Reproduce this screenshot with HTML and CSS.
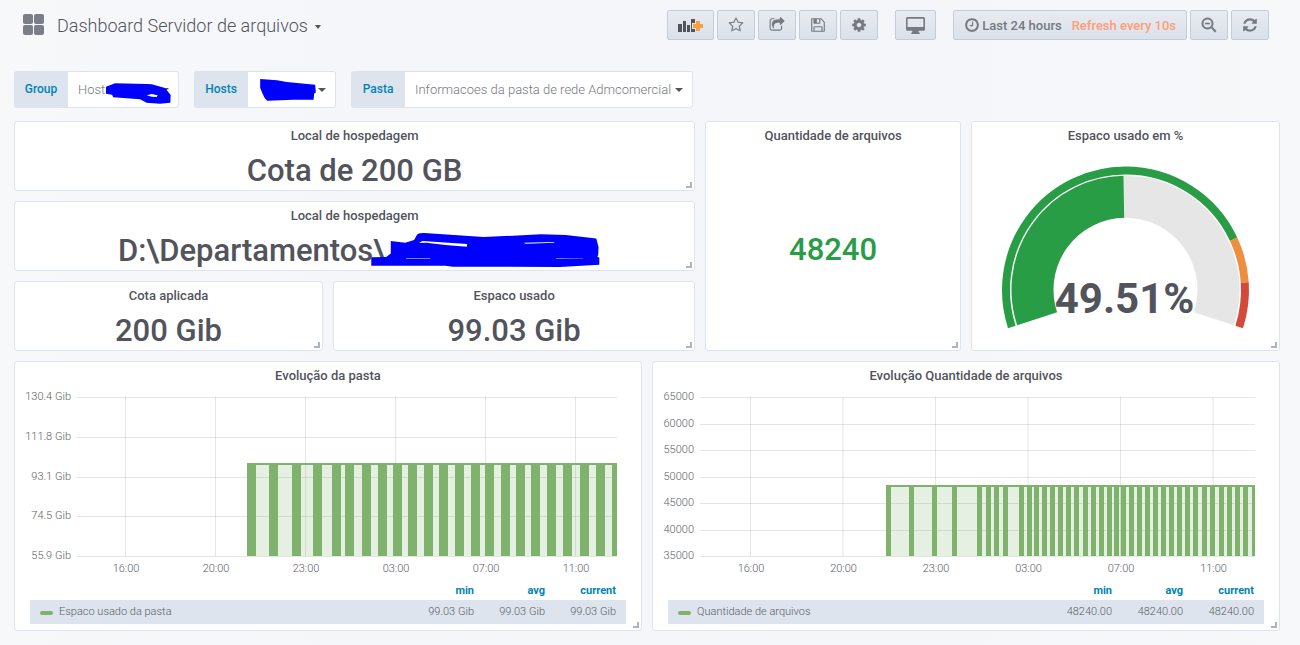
FILE: index.html
```html
<!DOCTYPE html>
<html lang="pt-BR">

<head>
    <meta charset="UTF-8">
    <meta name="viewport" content="width=device-width, initial-scale=1.0">
    <title>Dashboard Servidor de arquivos</title>
    <link rel="stylesheet" href="styles.css">
</head>

<body>
    <header class="navbar">
        <a href="#" class="title">
            <svg class="title-icon" viewBox="0 0 22 22">
                <rect x="0" y="0" width="10" height="10" rx="2" />
                <rect x="11" y="0" width="10" height="10" rx="2" />
                <rect x="0" y="11" width="10" height="10" rx="2" />
                <rect x="11" y="11" width="10" height="10" rx="2" />
            </svg>
            <h1>Dashboard Servidor de arquivos</h1>
            <span class="caret"></span>
        </a>
        <nav class="tools">
            <div class="group">
                <button class="btn" aria-label="Add panel">
                    <svg class="icon-add" viewBox="0 0 25 15">
                        <path d="M0 6h4v8H0zM5 3h3v11H5zM9 7h3v7H9zM13 1h4v13h-4z" fill="#52545c" />
                        <path d="M18 3h4v3h3v4h-3v3h-4v-3h-3V6h3z" fill="#f9a03f" stroke="#e2e6ed" stroke-width="2" paint-order="stroke" />
                    </svg>
                </button>
                <button class="btn" aria-label="Star">
                    <svg class="icon" viewBox="0 0 1792 1792"><path d="M1201 1004l306-297-422-62-189-382-189 382-422 62 306 297-73 421 378-199 377 199zm527-357q0 22-26 48l-363 354 86 500q1 7 1 20 0 50-41 50-19 0-40-12l-449-236-449 236q-22 12-40 12-21 0-31.5-14.5t-10.5-35.5q0-6 2-20l86-500-364-354q-25-27-25-48 0-37 56-46l502-73 225-455q19-41 49-41t49 41l225 455 502 73q56 9 56 46z" /></svg>
                </button>
                <button class="btn" aria-label="Share">
                    <svg class="icon" viewBox="0 0 1792 1792"><path d="M1472 989v259q0 119-84.5 203.5t-203.5 84.5h-832q-119 0-203.5-84.5t-84.5-203.5v-832q0-119 84.5-203.5t203.5-84.5h255q13 0 22.5 9.5t9.5 22.5q0 27-26 32-77 26-133 60-10 4-16 4h-112q-66 0-113 47t-47 113v832q0 66 47 113t113 47h832q66 0 113-47t47-113v-214q0-19 18-29 28-13 54-37 16-16 35-8 21 9 21 29zm237-496l-384 384q-18 19-45 19-12 0-25-5-39-17-39-59v-192h-160q-323 0-438 131-119 137-74 473 3 23-20 34-8 2-12 2-16 0-26-13-10-14-21-31t-39.5-68.5-49.5-99.5-38.5-114-17.5-122q0-49 3.5-91t14-90 28-88 47-81.5 68.5-74 94.5-61.5 124.5-48.5 159.5-30.5 196.5-11h160v-192q0-42 39-59 13-5 25-5 26 0 45 19l384 384q19 19 19 45t-19 45z" /></svg>
                </button>
                <button class="btn" aria-label="Save">
                    <svg class="icon" viewBox="0 0 1792 1792"><path d="M512 1536h768v-384h-768v384zm896 0h128v-896q0-14-10-38.5t-20-34.5l-281-281q-10-10-34-20t-39-10v416q0 40-28 68t-68 28h-576q-40 0-68-28t-28-68v-416h-128v1280h128v-416q0-40 28-68t68-28h832q40 0 68 28t28 68v416zm-384-928v-320q0-13-9.5-22.5t-22.5-9.5h-192q-13 0-22.5 9.5t-9.5 22.5v320q0 13 9.5 22.5t22.5 9.5h192q13 0 22.5-9.5t9.5-22.5zm640 32v928q0 40-28 68t-68 28h-1344q-40 0-68-28t-28-68v-1344q0-40 28-68t68-28h928q40 0 88 20t76 48l280 280q28 28 48 76t20 88z" /></svg>
                </button>
                <button class="btn" aria-label="Settings">
                    <svg class="icon" viewBox="0 0 1792 1792"><path d="M1152 896q0-106-75-181t-181-75-181 75-75 181 75 181 181 75 181-75 75-181zm512-109v222q0 12-8 23t-20 13l-185 28q-19 54-39 91 35 50 107 138 10 12 10 25t-9 23q-27 37-99 108t-94 71q-12 0-26-9l-138-108q-44 23-91 38-16 136-29 186-7 28-36 28h-222q-14 0-24.5-8.5t-11.5-21.5l-28-184q-49-16-90-37l-141 107q-10 9-25 9-14 0-25-11-126-114-165-168-7-10-7-23 0-12 8-23 15-21 51-66.5t54-70.5q-27-50-41-99l-183-27q-13-2-21-12.5t-8-23.5v-222q0-12 8-23t19-13l186-28q14-46 39-92-40-57-107-138-10-12-10-24 0-10 9-23 26-36 98.5-107.5t94.5-71.5q13 0 26 10l138 107q44-23 91-38 16-136 29-186 7-28 36-28h222q14 0 24.5 8.5t11.5 21.5l28 184q49 16 90 37l142-107q9-9 24-9 13 0 25 10 129 119 165 170 7 8 7 22 0 12-8 23-15 21-51 66.5t-54 70.5q26 50 41 98l183 28q13 2 21 12.5t8 23.5z" /></svg>
                </button>
            </div>
            <button class="btn" aria-label="Cycle view mode">
                <svg class="icon-tv" viewBox="0 0 18 16"><path fill-rule="evenodd" d="M1.500 0h15A1.500 1.500 0 0 1 18 1.500v10a1.500 1.500 0 0 1-1.500 1.500H12v1l1 1v1H5v-1l1-1v-1H1.500A1.500 1.500 0 0 1 0 11.500v-10A1.500 1.500 0 0 1 1.500 0zM1.500 1.500v8h15v-8z" /></svg>
            </button>
            <div class="group">
                <button class="btn btn-time">
                    <svg class="icon" viewBox="0 0 1792 1792"><path d="M1024 544v448q0 14-9 23t-23 9h-320q-14 0-23-9t-9-23v-64q0-14 9-23t23-9h224v-352q0-14 9-23t23-9h64q14 0 23 9t9 23zm416 352q0-148-73-273t-198-198-273-73-273 73-198 198-73 273 73 273 198 198 273 73 273-73 198-198 73-273zm224 0q0 209-103 385.5t-279.5 279.5-385.5 103-385.5-103-279.5-279.5-103-385.5 103-385.5 279.5-279.5 385.5-103 385.5 103 279.5 279.5 103 385.5z" /></svg>
                    <span>Last 24 hours</span>
                    <span class="refresh">Refresh every 10s</span>
                </button>
                <button class="btn" aria-label="Zoom out">
                    <svg class="icon" viewBox="0 0 16 16"><path d="M4 5.700h5v1.600H4z" /><circle cx="6.500" cy="6.500" r="5" fill="none" stroke="#767980" stroke-width="2" /><path d="M10 11l1.300-1.300 4.200 4.200-1.600 1.600z" /></svg>
                </button>
                <button class="btn" aria-label="Refresh">
                    <svg class="icon" viewBox="0 0 1792 1792"><path d="M1639 1056q0 5-1 7-64 268-268 434.500t-478 166.500q-146 0-282.500-55t-243.500-157l-129 129q-19 19-45 19t-45-19-19-45v-448q0-26 19-45t45-19h448q26 0 45 19t19 45-19 45l-137 137q71 66 161 102t187 36q134 0 250-65t186-179q11-17 53-117 8-23 30-23h192q13 0 22.500 9.500t9.500 22.500zm25-800v448q0 26-19 45t-45 19h-448q-26 0-45-19t-19-45 19-45l138-138q-148-137-349-137-134 0-250 65t-186 179q-11 17-53 117-8 23-30 23h-199q-13 0-22.500-9.500t-9.500-22.500v-7q65-268 270-434.500t480-166.500q146 0 284 55.500t245 156.500l130-129q19-19 45-19t45 19 19 45z" /></svg>
                </button>
            </div>
        </nav>
    </header>

    <section class="variables">
        <div class="variable">
            <label for="var-group">Group</label>
            <select id="var-group" class="select-group">
                <option>Host</option>
            </select>
            <svg class="scribble scribble-group" viewBox="318 249 195 63">
                <path fill-rule="evenodd" d="M318 260L345 250 440 252 455 253 495 264 512 285 511 308 480 311 440 308 420 298 340 292 336 284 318 281zM440 286L455 282 473 286 470 291 455 290z" />
            </svg>
        </div>
        <div class="variable">
            <label for="var-hosts">Hosts</label>
            <select id="var-hosts" class="select-hosts">
                <option></option>
            </select>
            <svg class="scribble scribble-hosts" viewBox="777 238 174 68">
                <path d="M778 238L830 242 860 247 948 256 950 280 945 283 943 302 880 302 800 305 792 297 785 283 778 265z" />
            </svg>
        </div>
        <div class="variable">
            <label for="var-pasta">Pasta</label>
            <select id="var-pasta">
                <option>Informacoes da pasta de rede Admcomercial</option>
            </select>
        </div>
    </section>

    <main class="dashboard">
        <section class="panel w13 h2">
            <h2>Local de hospedagem</h2>
            <div class="value">Cota de 200 GB</div>
        </section>
        <section class="panel w5 h6">
            <h2>Quantidade de arquivos</h2>
            <div class="value green">48240</div>
        </section>
        <section class="panel w6 h6">
            <h2>Espaco usado em %</h2>
            <svg class="gauge" viewBox="0 0 300 190">
                <!-- 216 degree arcs, pathLength 100 so dashes are percents -->
                <path class="arc base" d="M61.600 168.700A93 93 0 1 1 238.400 168.700" />
                <path class="arc fill" pathLength="100" stroke-dasharray="49.510 100" d="M61.600 168.700A93 93 0 1 1 238.400 168.700" />
                <path class="ring low" pathLength="100" stroke-dasharray="80 100" d="M36.300 176.900A119.500 119.500 0 1 1 263.700 176.900" />
                <path class="ring mid" pathLength="100" stroke-dasharray="0 80 10 100" d="M36.300 176.900A119.500 119.500 0 1 1 263.700 176.900" />
                <path class="ring high" pathLength="100" stroke-dasharray="0 90 10 100" d="M36.300 176.900A119.500 119.500 0 1 1 263.700 176.900" />
                <text x="149" y="163">49.51%</text>
            </svg>
        </section>
        <section class="panel w13 h2">
            <h2>Local de hospedagem</h2>
            <div class="value">D:\Departamentos\<svg class="scribble-path" viewBox="700 120 610 110" preserveAspectRatio="none">
                    <path fill-rule="evenodd" d="M825 130Q828 122 845 123L1000 135 1150 127 1215 129 1295 139 1301 165 1300 188 1298 194 1303 196 1303 217 1200 224 920 223 900 220 706 220 706 195 745 194 757 184 757 147 795 152 818 144zM831 153L840 147 957 156 956 164 900 159 850 152zM1105 152L1185 150 1185 152 1110 155zM797 199L860 197 860 199 797 200zM1190 197L1260 197 1260 198 1190 199z" />
                </svg></div>
        </section>
        <section class="panel w6 h2">
            <h2>Cota aplicada</h2>
            <div class="value">200 Gib</div>
        </section>
        <section class="panel w7 h2">
            <h2>Espaco usado</h2>
            <div class="value">99.03 Gib</div>
        </section>
        <section class="panel w12 h7">
            <h2>Evolução da pasta</h2>
            <div class="chart chart-size"><svg id="chart-size"></svg></div>
            <table class="legend">
                <tr>
                    <th></th>
                    <th>min</th>
                    <th>avg</th>
                    <th>current</th>
                </tr>
                <tr class="series">
                    <td>Espaco usado da pasta</td>
                    <td>99.03 Gib</td>
                    <td>99.03 Gib</td>
                    <td>99.03 Gib</td>
                </tr>
            </table>
        </section>
        <section class="panel w12 h7">
            <h2>Evolução Quantidade de arquivos</h2>
            <div class="chart chart-count"><svg id="chart-count"></svg></div>
            <table class="legend">
                <tr>
                    <th></th>
                    <th>min</th>
                    <th>avg</th>
                    <th>current</th>
                </tr>
                <tr class="series">
                    <td>Quantidade de arquivos</td>
                    <td>48240.00</td>
                    <td>48240.00</td>
                    <td>48240.00</td>
                </tr>
            </table>
        </section>
    </main>

    <script src="charts.js"></script>
</body>

</html>
```
FILE: styles.css
```css
* {
    box-sizing: border-box;
    margin: 0;
    padding: 0;
}

body {
    background: linear-gradient(90deg, #f7f8fa, #f5f6fa 30%, #f5f6fa 70%, #f7f8fa);
    color: #52545c;
    font-family: Roboto, "Liberation Sans", sans-serif;
    font-size: 13px;
}

a {
    color: inherit;
    text-decoration: none;
}

button,
select {
    font-family: inherit;
    font-size: 13px;
}

/* navbar */
.navbar {
    display: flex;
    align-items: center;
    justify-content: space-between;
    height: 50px;
    padding: 0 31px 0 23px;
}

.title {
    display: flex;
    align-items: center;
}

.title-icon {
    width: 22px;
    height: 22px;
    margin-right: 12px;
    fill: #7b7e86;
}

.title h1 {
    font-size: 18px;
    font-weight: 300;
}

.caret {
    margin: 4px 0 0 7px;
    border: 3px solid transparent;
    border-top: 4px solid #52545c;
    border-bottom: 0;
}

.tools {
    display: flex;
    gap: 17px;
}

.group {
    display: flex;
    gap: 3px;
}

.btn {
    display: flex;
    align-items: center;
    height: 30px;
    padding: 0 10px;
    border: 1px solid #c3cdd9;
    border-radius: 2px;
    background: linear-gradient(#e8ebf0, #dae1eb);
    color: #767980;
    font-weight: 500;
    white-space: nowrap;
}

.icon {
    width: 16px;
    height: 16px;
    fill: #767980;
}

.icon-add {
    width: 25px;
    height: 15px;
}

.icon-tv {
    width: 19px;
    height: 17px;
    fill: #767980;
}

.btn-time span {
    margin-left: 2px;
}

.btn-time .refresh {
    margin-left: 10px;
    color: #ff9e7a;
}

/* template variables */
.variables {
    display: flex;
    gap: 15px;
    padding: 21px 14px 13px;
}

.variable {
    display: flex;
    position: relative;
}

.variable label {
    width: 54px;
    height: 37px;
    border-radius: 3px 0 0 3px;
    background: #dde4ed;
    color: #0083b3;
    font-size: 12px;
    font-weight: 500;
    line-height: 37px;
    text-align: center;
}

.variable select {
    height: 37px;
    padding: 0 20px 0 10px;
    border: 1px solid #dde4ed;
    border-left: 0;
    border-radius: 0 3px 3px 0;
    appearance: none;
    background: #fff url("data:image/svg+xml,%3Csvg xmlns='http://www.w3.org/2000/svg' width='8' height='4'%3E%3Cpath d='M0 0h8L4 4z' fill='%2352545c'/%3E%3C/svg%3E") no-repeat right 9px center;
    color: #767980;
    font-weight: 300;
}

.variable .select-group {
    width: 111px;
}

.variable .select-hosts {
    width: 88px;
}

.scribble {
    position: absolute;
    fill: #00f;
}

.scribble-group {
    top: 12px;
    right: 8px;
    width: 65px;
    height: 21px;
}

.scribble-hosts {
    top: 8px;
    right: 19px;
    width: 58px;
    height: 22px;
}

/* panels: 24 columns, 30px rows */
.dashboard {
    display: grid;
    grid-template-columns: repeat(24, 1fr);
    grid-auto-rows: 30px;
    grid-auto-flow: dense;
    gap: 10px;
    padding: 0 20px 14px 14px;
}

.w5 { grid-column: span 5; }
.w6 { grid-column: span 6; }
.w7 { grid-column: span 7; }
.w12 { grid-column: span 12; }
.w13 { grid-column: span 13; }
.h2 { grid-row: span 2; }
.h6 { grid-row: span 6; }
.h7 { grid-row: span 7; }

.panel {
    display: flex;
    flex-direction: column;
    position: relative;
    min-width: 0;
    border: 1px solid #dde4ed;
    border-radius: 3px;
    background: #fff;
}

/* resize handle */
.panel::after {
    content: "";
    position: absolute;
    right: 2px;
    bottom: 2px;
    width: 4px;
    height: 4px;
    border-right: 2px solid #acb4bd;
    border-bottom: 2px solid #acb4bd;
}

.panel h2 {
    height: 28px;
    font-size: 13px;
    font-weight: 500;
    line-height: 28px;
    text-align: center;
}

.value {
    display: flex;
    flex: 1;
    align-items: center;
    justify-content: center;
    font-size: 31px;
    font-weight: 500;
    white-space: nowrap;
}

.h6 .value {
    padding-bottom: 2px;
}

.green {
    color: #299c46;
}

.scribble-path {
    width: 233px;
    height: 37px;
    margin: 0 -11px 0 -17px;
    fill: #00f;
}

/* gauge */
.gauge {
    width: 100%;
    height: 190px;
}

.arc {
    fill: none;
    stroke-width: 42px;
}

.ring {
    fill: none;
    stroke-width: 8px;
}

.base { stroke: #e6e6e6; }
.fill,
.low { stroke: #299c46; }
.mid { stroke: #ed8f3f; }
.high { stroke: #d44a3a; }

.gauge text {
    fill: #52545c;
    font-size: 42px;
    font-weight: 700;
    text-anchor: middle;
}

/* charts */
.chart {
    padding: 0 24px 0 62px;
}

.chart-count {
    padding-left: 47px;
}

.chart svg {
    display: block;
    width: 100%;
    height: 192px;
    overflow: visible;
}

.chart text {
    fill: #5c5e65;
    font-size: 11px;
    font-weight: 300;
}

.chart .tick-y { text-anchor: end; }
.chart .tick-x { text-anchor: middle; }
.chart .grid { fill: rgba(0, 0, 0, 0.1); }
.chart .area { fill: rgba(126, 178, 109, 0.2); }
.chart .bar { fill: #7eb26d; }

/* legend */
.legend {
    margin: 0 15px;
    border-collapse: collapse;
    font-size: 11px;
    line-height: 18px;
}

.legend th,
.legend td {
    width: 71px;
    padding-right: 10px;
    text-align: right;
    white-space: nowrap;
}

.legend th {
    color: #0083b3;
    font-weight: 700;
}

.legend th:first-child,
.legend td:first-child {
    width: auto;
    padding-left: 10px;
    text-align: left;
}

.series {
    height: 24px;
    background: #dde4ed;
    color: #5c5e65;
    font-weight: 300;
}

.series td:first-child::before {
    content: "";
    display: inline-block;
    width: 13px;
    height: 4px;
    margin-right: 6px;
    border-radius: 2px;
    background: #7eb26d;
}
```
FILE: charts.js
```js
var TOP = 7;
var BOTTOM = 166;
var hours = ['16:00', '20:00', '23:00', '03:00', '07:00', '11:00'];

function add(svg, name, attrs, text) {
    var el = document.createElementNS('http://www.w3.org/2000/svg', name);
    for (var key in attrs) {
        el.setAttribute(key, attrs[key]);
    }
    if (text) {
        el.textContent = text;
    }
    svg.appendChild(el);
}

// x positions are given on a 0..range scale and drawn as percents
function drawChart(id, opt) {
    var svg = document.getElementById(id);
    var pct = function (x) {
        return x / opt.range * 100 + '%';
    };

    opt.labels.forEach(function (label, i) {
        var y = Math.round(TOP + (BOTTOM - TOP) * i / (opt.labels.length - 1));
        add(svg, 'rect', { 'class': 'grid', x: 0, y: y, width: '100%', height: 1 });
        add(svg, 'text', { 'class': 'tick-y', x: -6, y: y + 3 }, label);
    });

    hours.forEach(function (hour, i) {
        var x = opt.tickStart + opt.tickStep * i;
        add(svg, 'rect', { 'class': 'grid', x: pct(x), y: TOP, width: 1, height: BOTTOM - TOP });
        add(svg, 'text', { 'class': 'tick-x', x: pct(x + 1), y: 182 }, hour);
    });

    var start = opt.bars[0];
    var width = pct(opt.range - start);
    add(svg, 'rect', { 'class': 'area', x: pct(start), y: opt.top, width: width, height: BOTTOM - opt.top });
    add(svg, 'rect', { 'class': 'bar', x: pct(start), y: opt.top, width: width, height: 2 });
    opt.bars.forEach(function (x) {
        var w = Math.min(opt.barWidth, opt.range - x);
        add(svg, 'rect', { 'class': 'bar', x: pct(x), y: opt.top, width: pct(w), height: BOTTOM - opt.top });
    });
}

drawChart('chart-size', {
    range: 540,
    labels: ['130.4 Gib', '111.8 Gib', '93.1 Gib', '74.5 Gib', '55.9 Gib'],
    tickStart: 48,
    tickStep: 90,
    top: 73,
    barWidth: 9,
    bars: [170, 192, 215, 236, 255, 268, 285, 301, 316, 331, 347, 362, 378, 394, 408, 424, 439, 454, 470, 486, 503, 519, 535]
});

drawChart('chart-count', {
    range: 555,
    labels: ['65000', '60000', '55000', '50000', '45000', '40000', '35000'],
    tickStart: 50,
    tickStep: 92.5,
    top: 95,
    barWidth: 5,
    bars: [186, 209, 232, 252, 277, 286, 294, 303, 319, 327, 334, 342, 350, 358, 366, 374, 383, 391, 399, 407, 414, 421, 429, 437, 445, 453, 461, 469, 477, 485, 493, 502, 510, 519, 527, 535, 543, 552]
});
```
